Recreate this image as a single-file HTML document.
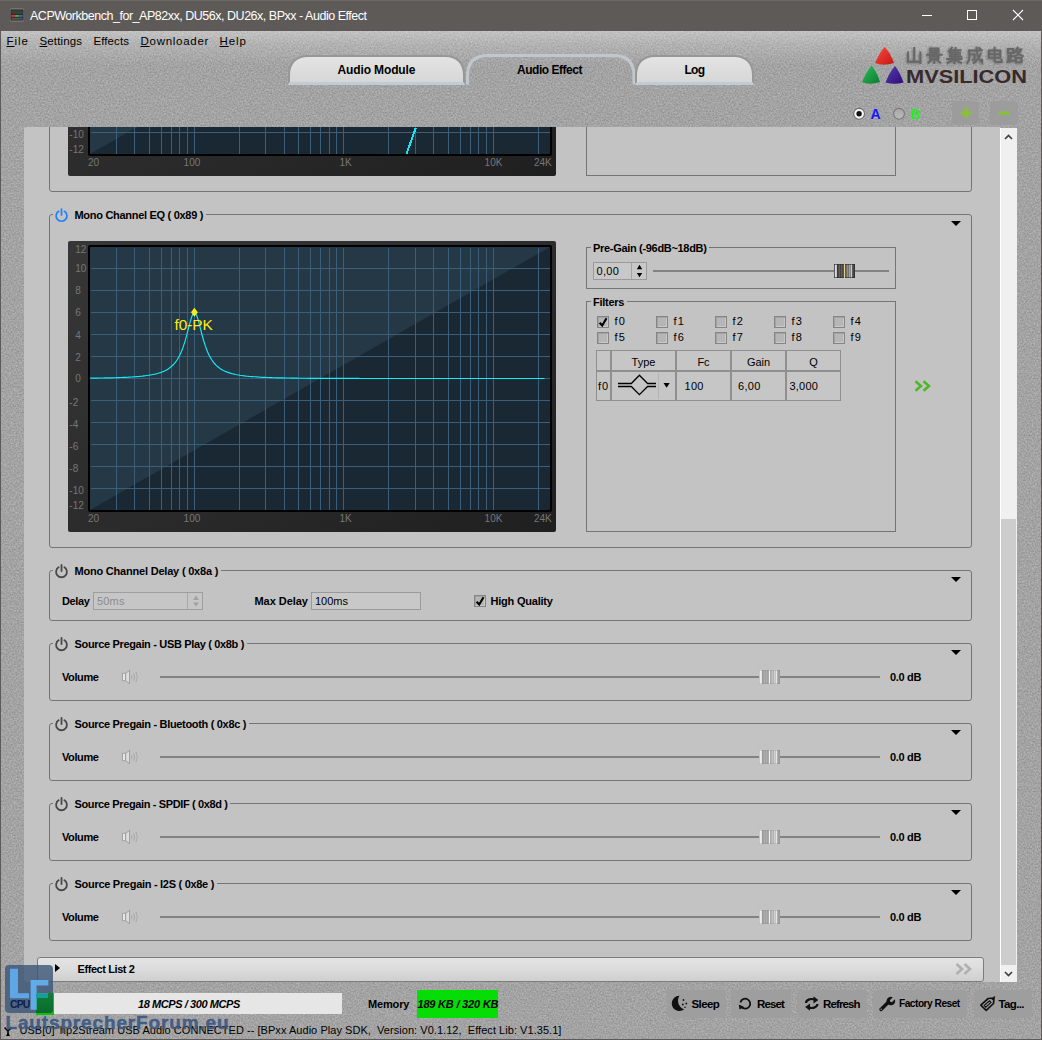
<!DOCTYPE html>
<html>
<head>
<meta charset="utf-8">
<title>ACPWorkbench - Audio Effect</title>
<style>
*{box-sizing:border-box;margin:0;padding:0}
html,body{width:1042px;height:1040px;overflow:hidden}
body{position:relative;background:#a3a3a3;font-family:"Liberation Sans",sans-serif;font-size:11px;color:#000}
.abs{position:absolute}
#noise{position:absolute;left:0;top:30px;width:1042px;height:1010px}
#titlebar{position:absolute;left:0;top:0;width:1042px;height:31px;background:#5e5a58;border-top:1px solid #6c6967}
#titlebar .t{position:absolute;left:30px;top:8px;font-size:12px;color:#fff;letter-spacing:-0.23px;white-space:nowrap}
#wl,#wr,#wb{position:absolute;background:#5e5a58}
#wl{left:0;top:30px;width:1px;height:1010px}
#wr{left:1041px;top:30px;width:1px;height:1010px}
#wb{left:0;top:1039px;width:1042px;height:1px}
#menu span{position:absolute;top:34px;font-size:12px;letter-spacing:0.35px;white-space:nowrap}
#menu u{text-decoration:underline;text-underline-offset:1px}
.tab{position:absolute;font-weight:bold;font-size:12px;text-align:center;white-space:nowrap;letter-spacing:-0.15px}
#panel{position:absolute;left:24px;top:127px;width:976px;height:855px;background:#c3c3c3;border-radius:3px 0 0 3px;overflow:hidden}
#content{position:absolute;left:-24px;top:-127px;width:1042px;height:1040px}
.gb{position:absolute;border:1px solid #757575;border-radius:3px}
.gbt{position:absolute;font-weight:bold;font-size:11px;white-space:nowrap;background:#c3c3c3;letter-spacing:-0.33px;line-height:13px}
.lbl{position:absolute;font-weight:bold;font-size:11px;white-space:nowrap;letter-spacing:-0.3px;line-height:13px}
.txt{position:absolute;font-size:11px;white-space:nowrap;line-height:13px}
.arr{position:absolute;width:0;height:0;margin-top:1px;border-left:5px solid transparent;border-right:5px solid transparent;border-top:5px solid #000}
.cb{position:absolute;width:12px;height:12px;border:1px solid #858585;background:#b6b6b6;box-shadow:inset 1px 1px 0 #a4a4a4,inset -1px -1px 0 #c8c8c8}
.trk{position:absolute;height:2px;background:#828282}
.hnd{position:absolute;width:21px;height:14px;border:1px solid #9c9c9c;border-radius:1px;background:repeating-linear-gradient(90deg,#d8d8d8 0,#d8d8d8 1px,#b4b4b4 1px,#b4b4b4 2px,#cfcfcf 2px,#cfcfcf 3px)}
.btn{position:absolute;top:990px;height:28px;background:#9e9e9e;border-radius:4px}
.btn span{position:absolute;top:8px;font-weight:bold;font-size:11.5px;white-space:nowrap;letter-spacing:-0.3px}
</style>
</head>
<body>
<svg id="noise" width="1042" height="1010"><filter id="nf" x="0" y="0" width="100%" height="100%" color-interpolation-filters="sRGB"><feTurbulence type="fractalNoise" baseFrequency="0.62" numOctaves="2" seed="7"/><feColorMatrix type="matrix" values="0.24 0 0 0 0.52  0.24 0 0 0 0.52  0.24 0 0 0 0.52  0 0 0 0 1"/></filter><rect width="1042" height="1010" filter="url(#nf)"/></svg>

<!-- title bar -->
<div id="titlebar">
  <svg class="abs" style="left:10px;top:7px" width="14" height="14" viewBox="0.5 1 15 14"><rect x="0.5" y="1.5" width="15" height="13" rx="1.5" fill="#2b2b2b" stroke="#8a8a8a"/><rect x="2" y="3" width="12" height="4" fill="#3a3f3a"/><rect x="2" y="8" width="4" height="2" fill="#d33"/><rect x="6" y="8" width="4" height="2" fill="#3b3"/><rect x="10" y="8" width="4" height="2" fill="#36d"/><rect x="2" y="11" width="12" height="2" fill="#555"/></svg>
  <div class="txt" style="left:30px;top:8px;font-size:12.5px;letter-spacing:-0.479px;font-weight:normal;color:#fff;line-height:15px">ACPWorkbench_for_AP82xx, DU56x, DU26x, BPxx - Audio Effect</div>
  <svg class="abs" style="left:900px;top:-1px" width="142" height="30" viewBox="0 0 142 30"><path d="M22 15.5H32" stroke="#fff" stroke-width="1"/><rect x="67.5" y="10.5" width="9" height="9" fill="none" stroke="#fff" stroke-width="1"/><path d="M113 10L123 20M123 10L113 20" stroke="#fff" stroke-width="1.1"/></svg>
</div>
<div id="wl"></div><div id="wr"></div><div id="wb"></div>

<!-- menu -->
<div class="abs" style="left:1px;top:31px;width:1040px;height:34px;background:linear-gradient(rgba(255,255,255,0.34),rgba(255,255,255,0.16) 40%,rgba(255,255,255,0))"></div>
<div id="menu">
  <div class="txt" style="left:6.5px;top:34px;font-size:11.5px;letter-spacing:0.963px;font-weight:normal;line-height:14px"><u>F</u>ile</div>
  <div class="txt" style="left:39.5px;top:34px;font-size:11.5px;letter-spacing:0.124px;font-weight:normal;line-height:14px"><u>S</u>ettings</div>
  <div class="txt" style="left:93.5px;top:34px;font-size:11.5px;letter-spacing:0.079px;font-weight:normal;line-height:14px">Effects</div>
  <div class="txt" style="left:140.5px;top:34px;font-size:11.5px;letter-spacing:0.728px;font-weight:normal;line-height:14px"><u>D</u>ownloader</div>
  <div class="txt" style="left:219.5px;top:34px;font-size:11.5px;letter-spacing:0.923px;font-weight:normal;line-height:14px"><u>H</u>elp</div>
</div>

<!-- tabs -->
<svg class="abs" style="left:280px;top:48px" width="490" height="44" viewBox="280 48 490 44">
  <defs><linearGradient id="tg" x1="0" y1="0" x2="0" y2="1"><stop offset="0" stop-color="#e4e4e4"/><stop offset="1" stop-color="#d6d6d6"/></linearGradient></defs>
  <!-- Audio Module -->
  <path d="M289 84V75C289 63 296 56 308 56H445C457 56 464 63 464 75V84Z" fill="url(#tg)" stroke="#979797" stroke-width="2"/>
  <path d="M287.500 85L289.500 82H463.500L465.500 85Z" fill="#c3cbd2"/>
  <!-- Audio Effect -->
  <path d="M467.500 84.500V76C467.500 62.500 474.500 55.500 488 55.500H613.500C627 55.500 634 62.500 634 76V84.500" fill="none" stroke="#c0c7ce" stroke-width="3"/>
  <!-- Log -->
  <path d="M636 84V75C636 63 643 56 655 56H734C746 56 753 63 753 75V84Z" fill="url(#tg)" stroke="#979797" stroke-width="2"/>
  <path d="M634.500 85L636.500 82H752.500L754.500 85Z" fill="#c3cbd2"/>
</svg>
<div class="lbl" style="left:337.5px;top:63px;font-size:12px;letter-spacing:-0.124px;font-weight:bold;line-height:14px">Audio Module</div>
<div class="lbl" style="left:517px;top:63px;font-size:12px;letter-spacing:-0.473px;font-weight:bold;line-height:14px">Audio Effect</div>
<div class="lbl" style="left:684.5px;top:63px;font-size:12px;letter-spacing:-0.765px;font-weight:bold;line-height:14px">Log</div>

<!-- logo -->
<svg class="abs" style="left:858px;top:42px" width="175" height="46" viewBox="858 42 175 46">
<defs>
<linearGradient id="lr" x1="0" y1="0" x2="1" y2="1"><stop offset="0" stop-color="#ff4a3a"/><stop offset="1" stop-color="#c01818"/></linearGradient>
<linearGradient id="lg" x1="0" y1="0" x2="1" y2="1"><stop offset="0" stop-color="#2ec05a"/><stop offset="1" stop-color="#0a7a30"/></linearGradient>
<linearGradient id="lb" x1="0" y1="0" x2="1" y2="1"><stop offset="0" stop-color="#5a3ab0"/><stop offset="1" stop-color="#2a1078"/></linearGradient>
</defs>
<path d="M884.500 47Q880 52 875 63Q884 66.500 894 63Q890 52 884.500 47Z" fill="url(#lr)"/>
<path d="M871.500 65.500Q866 72 862 82.500Q871 85 880 82Q877 72 871.500 65.500Z" fill="url(#lg)"/>
<path d="M895 66Q889 73 885.500 82.500Q895 85 903.500 82.500Q900 72 895 66Z" fill="url(#lb)"/>
<defs><filter id="cjb" x="-20%" y="-30%" width="140%" height="160%"><feGaussianBlur stdDeviation="1.300"/></filter></defs>
<g fill="none" stroke="#5c5c5c" stroke-width="2.600" opacity="0.550" filter="url(#cjb)"><path transform="translate(905.2 48.300) scale(1.030 0.970)" d="M8 0.500V14.500M2 5V14.500H14M14 5V15.800"/><path transform="translate(925.3 48.300) scale(1.030 0.970)" d="M4 0.800H12V5.200H4ZM4 3H12M1 7.300H15M8 5.200V7.300M4.200 9.200H11.800V11.800H4.200ZM8 11.800V16M5 13L2.200 15.600M11 13L13.800 15.600"/><path transform="translate(945.4 48.300) scale(1.030 0.970)" d="M5.500 0L2.500 4M4 3V9.500M4 2.600H14M4 4.900H13.500M4 7.200H13.500M4 9.500H14.800M9 0.300V9.500M1 11.800H15M8 9.500V16.200M7 12.500L1.500 15.800M9 12.500L14.500 15.800"/><path transform="translate(965.5 48.300) scale(1.030 0.970)" d="M2.500 3H15M3 3V10Q3 14 1 15.800M3 7H8V11.800L6.300 12.600M9.800 0Q10.300 10.500 15.300 15.300V12.500M14 6.300Q12 12 7.300 15.800M12.300 0.300L14 2"/><path transform="translate(985.6 48.300) scale(1.030 0.970)" d="M2.500 3H13.500V10.500H2.500ZM2.500 6.800H13.500M8 0V13.200Q8 14.800 9.800 14.800H14.800V12.500"/><path transform="translate(1005.7 48.300) scale(1.030 0.970)" d="M1.500 1.500H6.500V5.500H1.500ZM4 5.500V13.800M4 9H7M1.800 8.300V14.600M1 14.900L7.500 13.200M10.800 0L8 4.800M9.800 2H14.200Q12.500 6.500 7.800 9.200M9.800 3.800Q11.800 7.500 15.800 8.800M9.200 10.600H14.600V15.200H9.200Z"/></g>
<g fill="none" stroke="#676767" stroke-width="2" stroke-linecap="square"><path transform="translate(906.0 47.600) scale(1.030 0.970)" d="M8 0.500V14.500M2 5V14.500H14M14 5V15.800"/><path transform="translate(926.1 47.600) scale(1.030 0.970)" d="M4 0.800H12V5.200H4ZM4 3H12M1 7.300H15M8 5.200V7.300M4.200 9.200H11.800V11.800H4.200ZM8 11.800V16M5 13L2.200 15.600M11 13L13.800 15.600"/><path transform="translate(946.2 47.600) scale(1.030 0.970)" d="M5.500 0L2.500 4M4 3V9.500M4 2.600H14M4 4.900H13.500M4 7.200H13.500M4 9.500H14.800M9 0.300V9.500M1 11.800H15M8 9.500V16.200M7 12.500L1.500 15.800M9 12.500L14.500 15.800"/><path transform="translate(966.3 47.600) scale(1.030 0.970)" d="M2.500 3H15M3 3V10Q3 14 1 15.800M3 7H8V11.800L6.300 12.600M9.800 0Q10.300 10.500 15.300 15.300V12.500M14 6.300Q12 12 7.300 15.800M12.300 0.300L14 2"/><path transform="translate(986.4 47.600) scale(1.030 0.970)" d="M2.500 3H13.500V10.500H2.500ZM2.500 6.800H13.500M8 0V13.200Q8 14.800 9.800 14.800H14.800V12.500"/><path transform="translate(1006.5 47.600) scale(1.030 0.970)" d="M1.500 1.500H6.500V5.500H1.500ZM4 5.500V13.800M4 9H7M1.800 8.300V14.600M1 14.900L7.500 13.200M10.800 0L8 4.800M9.800 2H14.200Q12.500 6.500 7.800 9.200M9.800 3.800Q11.800 7.500 15.800 8.800M9.200 10.600H14.600V15.200H9.200Z"/></g>
<text x="906" y="82.500" font-family="Liberation Sans, sans-serif" font-weight="bold" font-size="18" fill="#382a2c" textLength="121" lengthAdjust="spacingAndGlyphs">MVSILICON</text>
</svg>

<!-- A/B radios, +/- -->
<svg class="abs" style="left:850px;top:100px" width="180" height="28" viewBox="850 100 180 28">
  <defs><linearGradient id="rg" x1="0" y1="0" x2="0" y2="1"><stop offset="0" stop-color="#a6a6a6"/><stop offset="1" stop-color="#bcbcbc"/></linearGradient></defs>
  <circle cx="859.100" cy="113.800" r="5.400" fill="#f6f6f6" stroke="#707070" stroke-width="1.100"/><circle cx="859.100" cy="113.800" r="2.700" fill="#101010"/>
  <circle cx="899" cy="113.800" r="5.400" fill="url(#rg)" stroke="#787878" stroke-width="1.100"/>
  <rect x="952" y="101" width="27" height="24" rx="4" fill="#9b9b9b" fill-opacity="0.900"/>
  <rect x="990" y="101" width="28" height="24" rx="4" fill="#9b9b9b" fill-opacity="0.900"/>
  <path d="M962.200 113H970.200M966.200 109V117" stroke="#86c232" stroke-width="3.400" stroke-linecap="round"/>
  <path d="M1000.200 113.100H1008.200" stroke="#86c232" stroke-width="3.400" stroke-linecap="round"/>
</svg>
<div class="abs" style="left:870.500px;top:106px;font-weight:bold;font-size:14px;line-height:16px;color:#1414ff">A</div>
<div class="abs" style="left:910.500px;top:106px;font-weight:bold;font-size:14px;line-height:16px;color:#18f818;letter-spacing:-0.5px;transform:scaleX(0.92);transform-origin:left">B</div>

<!-- main panel -->
<div id="panel"><div id="content">

  <!-- previous group (cut) -->
  <div class="gb" style="left:49px;top:100px;width:923px;height:92px"></div>
  <div class="gb" style="left:586px;top:100px;width:310px;height:76px;border-radius:0"></div>
  <svg class="graph" style="position:absolute;left:68px;top:-115px" width="488" height="291" viewBox="68 241 488 291">
<defs><linearGradient id="fr-115" x1="0" y1="0" x2="1" y2="1"><stop offset="0" stop-color="#373737"/><stop offset="0.5" stop-color="#2c2c2c"/><stop offset="1" stop-color="#1f1f1f"/></linearGradient></defs>
<rect x="68" y="241" width="488" height="291" rx="2" fill="url(#fr-115)"/>
<rect x="88" y="245" width="464" height="267" rx="2" fill="#000"/>
<rect x="90" y="247" width="460" height="263" rx="1" fill="#1a2833"/>
<polygon points="90,247 550,247 90,510" fill="#253845"/>
<path d="M116.5 248V510 M134.5 248V510 M149.5 248V510 M161.5 248V510 M171.5 248V510 M179.5 248V510 M187.5 248V510 M194.5 248V510 M239.5 248V510 M265.5 248V510 M284.5 248V510 M298.5 248V510 M310.5 248V510 M320.5 248V510 M329.5 248V510 M336.5 248V510 M343.5 248V510 M388.5 248V510 M415.5 248V510 M433.5 248V510 M448.5 248V510 M460.5 248V510 M470.5 248V510 M478.5 248V510 M486.5 248V510 M493.5 248V510 M538.5 248V510 M91 488.5H550 M91 466.5H550 M91 444.5H550 M91 422.5H550 M91 400.5H550 M91 378.5H550 M91 356.5H550 M91 334.5H550 M91 312.5H550 M91 290.5H550 M91 268.5H550" stroke="#3b5f7b" stroke-width="1" fill="none" shape-rendering="crispEdges"/>
<g font-family="Liberation Sans, sans-serif" font-size="10" fill="#767676">
<text x="75.2" y="252.8">12</text>
<text x="75.2" y="272.0">10</text>
<text x="75.2" y="294.1">8</text>
<text x="75.2" y="316.0">6</text>
<text x="75.2" y="338.6">4</text>
<text x="75.2" y="360.7">2</text>
<text x="75.2" y="382.3">0</text>
<text x="69.3" y="405.5">-2</text>
<text x="69.3" y="427.9">-4</text>
<text x="69.3" y="450.2">-6</text>
<text x="69.3" y="471.9">-8</text>
<text x="69.3" y="493.8">-10</text>
<text x="69.3" y="509.4">-12</text>
<text x="88" y="521.6">20</text>
<text x="183.6" y="521.6">100</text>
<text x="339.4" y="521.6">1K</text>
<text x="484.6" y="521.6">10K</text>
<text x="534" y="521.6">24K</text>
</g>
<path d="M406.5 510 L415.7 484" stroke="#19e6f0" stroke-width="2" fill="none" shape-rendering="crispEdges"/>
</svg>

  <!-- Mono Channel EQ -->
  <div class="gb" style="left:49px;top:214px;width:923px;height:334px"></div>
  <div class="gbt" style="left:53px;top:209px;width:153px;height:13px"></div><div class="lbl" style="left:74.5px;top:209px;font-size:11px;letter-spacing:-0.296px;font-weight:bold;">Mono Channel EQ ( 0x89 )</div>
  <svg class="abs" style="left:54px;top:207.500px" width="15" height="15" viewBox="0 0 15 15"><path d="M4.600 3.300A5.400 5.400 0 1 0 10.400 3.300" fill="none" stroke="#1e80ff" stroke-width="1.700" stroke-linecap="round"/><path d="M7.500 1V7" stroke="#1e80ff" stroke-width="1.700" stroke-linecap="round"/></svg>
  <div class="arr" style="left:951px;top:220px"></div>
  <svg class="graph" style="position:absolute;left:68px;top:241px" width="488" height="291" viewBox="68 241 488 291">
<defs><linearGradient id="fr241" x1="0" y1="0" x2="1" y2="1"><stop offset="0" stop-color="#373737"/><stop offset="0.5" stop-color="#2c2c2c"/><stop offset="1" stop-color="#1f1f1f"/></linearGradient></defs>
<rect x="68" y="241" width="488" height="291" rx="2" fill="url(#fr241)"/>
<rect x="88" y="245" width="464" height="267" rx="2" fill="#000"/>
<rect x="90" y="247" width="460" height="263" rx="1" fill="#1a2833"/>
<polygon points="90,247 550,247 90,510" fill="#253845"/>
<path d="M116.5 248V510 M134.5 248V510 M149.5 248V510 M161.5 248V510 M171.5 248V510 M179.5 248V510 M187.5 248V510 M194.5 248V510 M239.5 248V510 M265.5 248V510 M284.5 248V510 M298.5 248V510 M310.5 248V510 M320.5 248V510 M329.5 248V510 M336.5 248V510 M343.5 248V510 M388.5 248V510 M415.5 248V510 M433.5 248V510 M448.5 248V510 M460.5 248V510 M470.5 248V510 M478.5 248V510 M486.5 248V510 M493.5 248V510 M538.5 248V510 M91 488.5H550 M91 466.5H550 M91 444.5H550 M91 422.5H550 M91 400.5H550 M91 378.5H550 M91 356.5H550 M91 334.5H550 M91 312.5H550 M91 290.5H550 M91 268.5H550" stroke="#3b5f7b" stroke-width="1" fill="none" shape-rendering="crispEdges"/>
<g font-family="Liberation Sans, sans-serif" font-size="10" fill="#767676">
<text x="75.2" y="252.8">12</text>
<text x="75.2" y="272.0">10</text>
<text x="75.2" y="294.1">8</text>
<text x="75.2" y="316.0">6</text>
<text x="75.2" y="338.6">4</text>
<text x="75.2" y="360.7">2</text>
<text x="75.2" y="382.3">0</text>
<text x="69.3" y="405.5">-2</text>
<text x="69.3" y="427.9">-4</text>
<text x="69.3" y="450.2">-6</text>
<text x="69.3" y="471.9">-8</text>
<text x="69.3" y="493.8">-10</text>
<text x="69.3" y="509.4">-12</text>
<text x="88" y="521.6">20</text>
<text x="183.6" y="521.6">100</text>
<text x="339.4" y="521.6">1K</text>
<text x="484.6" y="521.6">10K</text>
<text x="534" y="521.6">24K</text>
</g>
<path d="M90.0 378.2 L91.5 378.1 L93.0 378.1 L94.5 378.1 L96.0 378.1 L97.5 378.1 L99.0 378.0 L100.5 378.0 L102.0 378.0 L103.5 378.0 L105.0 377.9 L106.5 377.9 L108.0 377.9 L109.5 377.8 L111.0 377.8 L112.5 377.8 L114.0 377.7 L115.5 377.7 L117.0 377.6 L118.5 377.6 L120.0 377.5 L121.5 377.5 L123.0 377.4 L124.5 377.3 L126.0 377.3 L127.5 377.2 L129.0 377.1 L130.5 377.0 L132.0 377.0 L133.5 376.9 L135.0 376.8 L136.5 376.6 L138.0 376.5 L139.5 376.4 L141.0 376.2 L142.5 376.1 L144.0 375.9 L145.5 375.7 L147.0 375.5 L148.5 375.3 L150.0 375.1 L151.5 374.8 L153.0 374.5 L154.5 374.2 L156.0 373.9 L157.5 373.5 L159.0 373.0 L160.5 372.6 L162.0 372.0 L163.5 371.4 L165.0 370.7 L166.5 369.9 L168.0 369.0 L169.5 368.0 L171.0 366.8 L172.5 365.5 L174.0 363.9 L175.5 362.1 L177.0 360.0 L178.5 357.5 L180.0 354.7 L181.5 351.3 L183.0 347.4 L184.5 342.9 L186.0 337.8 L187.5 332.2 L189.0 326.3 L190.5 320.6 L192.0 315.9 L193.5 313.0 L195.0 312.7 L196.5 315.0 L198.0 319.4 L199.5 324.9 L201.0 330.8 L202.5 336.5 L204.0 341.8 L205.5 346.4 L207.0 350.5 L208.5 353.9 L210.0 356.9 L211.5 359.5 L213.0 361.7 L214.5 363.5 L216.0 365.1 L217.5 366.5 L219.0 367.7 L220.5 368.8 L222.0 369.7 L223.5 370.5 L225.0 371.2 L226.5 371.9 L228.0 372.4 L229.5 372.9 L231.0 373.4 L232.5 373.8 L234.0 374.1 L235.5 374.5 L237.0 374.8 L238.5 375.0 L240.0 375.3 L241.5 375.5 L243.0 375.7 L244.5 375.9 L246.0 376.1 L247.5 376.2 L249.0 376.4 L250.5 376.5 L252.0 376.6 L253.5 376.7 L255.0 376.8 L256.5 376.9 L258.0 377.0 L259.5 377.1 L261.0 377.2 L262.5 377.3 L264.0 377.3 L265.5 377.4 L267.0 377.5 L268.5 377.5 L270.0 377.6 L271.5 377.6 L273.0 377.7 L274.5 377.7 L276.0 377.8 L277.5 377.8 L279.0 377.8 L280.5 377.9 L282.0 377.9 L283.5 377.9 L285.0 378.0 L286.5 378.0 L288.0 378.0 L289.5 378.0 L291.0 378.1 L292.5 378.1 L294.0 378.1 L295.5 378.1 L297.0 378.1 L298.5 378.2 L300.0 378.2 L301.5 378.2 L303.0 378.2 L304.5 378.2 L306.0 378.2 L307.5 378.2 L309.0 378.3 L310.5 378.3 L312.0 378.3 L313.5 378.3 L315.0 378.3 L316.5 378.3 L318.0 378.3 L319.5 378.3 L321.0 378.3 L322.5 378.3 L324.0 378.3 L325.5 378.4 L327.0 378.4 L328.5 378.4 L330.0 378.4 L331.5 378.4 L333.0 378.4 L334.5 378.4 L336.0 378.4 L337.5 378.4 L339.0 378.4 L340.5 378.4 L342.0 378.4 L343.5 378.4 L345.0 378.4 L346.5 378.4 L348.0 378.4 L349.5 378.4 L351.0 378.4 L352.5 378.4 L354.0 378.4 L355.5 378.4 L357.0 378.4 L358.5 378.4 L360.0 378.5 L361.5 378.5 L363.0 378.5 L364.5 378.5 L366.0 378.5 L367.5 378.5 L369.0 378.5 L370.5 378.5 L372.0 378.5 L373.5 378.5 L375.0 378.5 L376.5 378.5 L378.0 378.5 L379.5 378.5 L381.0 378.5 L382.5 378.5 L384.0 378.5 L385.5 378.5 L387.0 378.5 L388.5 378.5 L390.0 378.5 L391.5 378.5 L393.0 378.5 L394.5 378.5 L396.0 378.5 L397.5 378.5 L399.0 378.5 L400.5 378.5 L402.0 378.5 L403.5 378.5 L405.0 378.5 L406.5 378.5 L408.0 378.5 L409.5 378.5 L411.0 378.5 L412.5 378.5 L414.0 378.5 L415.5 378.5 L417.0 378.5 L418.5 378.5 L420.0 378.5 L421.5 378.5 L423.0 378.5 L424.5 378.5 L426.0 378.5 L427.5 378.5 L429.0 378.5 L430.5 378.5 L432.0 378.5 L433.5 378.5 L435.0 378.5 L436.5 378.5 L438.0 378.5 L439.5 378.5 L441.0 378.5 L442.5 378.5 L444.0 378.5 L445.5 378.5 L447.0 378.5 L448.5 378.5 L450.0 378.5 L451.5 378.5 L453.0 378.5 L454.5 378.5 L456.0 378.5 L457.5 378.5 L459.0 378.5 L460.5 378.5 L462.0 378.5 L463.5 378.5 L465.0 378.5 L466.5 378.5 L468.0 378.5 L469.5 378.5 L471.0 378.5 L472.5 378.5 L474.0 378.5 L475.5 378.5 L477.0 378.5 L478.5 378.5 L480.0 378.5 L481.5 378.5 L483.0 378.5 L484.5 378.5 L486.0 378.5 L487.5 378.5 L489.0 378.5 L490.5 378.5 L492.0 378.5 L493.5 378.5 L495.0 378.5 L496.5 378.5 L498.0 378.5 L499.5 378.5 L501.0 378.5 L502.5 378.5 L504.0 378.5 L505.5 378.5 L507.0 378.5 L508.5 378.5 L510.0 378.5 L511.5 378.5 L513.0 378.5 L514.5 378.5 L516.0 378.5 L517.5 378.5 L519.0 378.5 L520.5 378.5 L522.0 378.5 L523.5 378.5 L525.0 378.5 L526.5 378.5 L528.0 378.5 L529.5 378.5 L531.0 378.5 L532.5 378.5 L534.0 378.5 L535.5 378.5 L537.0 378.5 L538.5 378.5 L540.0 378.5 L541.5 378.5 L543.0 378.5 L544.5 378.5" stroke="#12eef8" stroke-width="1.15" fill="none"/>
<polygon points="194.4,307.7 197.8,312.2 194.4,316.7 191.0,312.2" fill="#ffea1a"/>
<text x="174.4" y="330" font-family="Liberation Sans, sans-serif" font-size="15" fill="#ffea1a" textLength="38.5" lengthAdjust="spacingAndGlyphs">f0-PK</text>
</svg>

  <!-- Pre-Gain -->
  <div class="gb" style="left:586px;top:247px;width:310px;height:42px;border-radius:0"></div>
  <div class="gbt" style="left:591px;top:242px;width:118px;height:13px"></div><div class="lbl" style="left:593px;top:242px;font-size:11px;letter-spacing:-0.312px;font-weight:bold;">Pre-Gain (-96dB~18dB)</div>
  <div class="abs" style="left:593px;top:262px;width:54px;height:18px;border:1px solid #9a9a9a;background:#c8c8c8"></div>
  <div class="abs" style="left:631px;top:263px;width:1px;height:16px;background:#a4a4a4"></div>
  <div class="txt" style="left:596.5px;top:265px;font-size:11px;letter-spacing:0.324px;font-weight:normal;">0,00</div>
  <svg class="abs" style="left:634px;top:264px" width="11" height="14" viewBox="0 0 11 14"><path d="M5.500 0.800L8.200 5.300H2.800Z M5.500 13.300L8.200 8.900H2.800Z" fill="#000"/></svg>
  <div class="trk" style="left:653px;top:270px;width:236px"></div>
  <svg class="abs" style="left:834px;top:264px" width="21" height="14" viewBox="0 0 21 14" shape-rendering="crispEdges"><rect x="0" y="0" width="1" height="14" fill="#5a5a5a"/><rect x="1" y="0" width="1" height="14" fill="#dadada"/><rect x="2" y="0" width="1" height="14" fill="#c6c6c6"/><rect x="3" y="0" width="1" height="14" fill="#3a3a3a"/><rect x="4" y="0" width="1" height="14" fill="#4a4a4a"/><rect x="5" y="0" width="1" height="14" fill="#626262"/><rect x="6" y="0" width="1" height="14" fill="#444"/><rect x="7" y="0" width="1" height="14" fill="#5e5e5e"/><rect x="8" y="0" width="1" height="14" fill="#484848"/><rect x="9" y="0" width="1" height="14" fill="#585858"/><rect x="10" y="0" width="1" height="14" fill="#f0dc90"/><rect x="11" y="0" width="1" height="14" fill="#5a5a5a"/><rect x="12" y="0" width="1" height="14" fill="#707070"/><rect x="13" y="0" width="1" height="14" fill="#8c8c8c"/><rect x="14" y="0" width="1" height="14" fill="#707070"/><rect x="15" y="0" width="1" height="14" fill="#a2a2a2"/><rect x="16" y="0" width="1" height="14" fill="#888"/><rect x="17" y="0" width="1" height="14" fill="#cacaca"/><rect x="18" y="0" width="1" height="14" fill="#5c5c5c"/><rect x="19" y="0" width="1" height="14" fill="#484848"/><rect x="20" y="0" width="1" height="14" fill="#343434"/><rect x="0" y="0" width="21" height="1" fill="#2c2c2c" opacity="0.6"/><rect x="0" y="13" width="21" height="1" fill="#2c2c2c" opacity="0.6"/><rect x="10" y="0" width="1" height="14" fill="#e6cf80"/></svg>

  <!-- Filters -->
  <div class="gb" style="left:586px;top:301px;width:310px;height:231px;border-radius:0"></div>
  <div class="gbt" style="left:591px;top:295px;width:36px;height:13px"></div><div class="lbl" style="left:593px;top:296px;font-size:11px;letter-spacing:-0.272px;font-weight:bold;">Filters</div>
  <div class="cb" style="left:597px;top:316px"></div>
  <svg class="abs" style="left:597px;top:316px" width="12" height="12" viewBox="0 0 12 12"><path d="M2.600 6.800L5.200 9.500L9.500 2.300" fill="none" stroke="#000" stroke-width="2.100"/></svg>
  <div class="txt" style="left:614.5px;top:315px;font-size:11px;letter-spacing:1.206px;font-weight:normal;">f0</div>
  <div class="cb" style="left:656px;top:316px"></div>
  <div class="txt" style="left:673.5px;top:315px;font-size:11px;letter-spacing:1.206px;font-weight:normal;">f1</div>
  <div class="cb" style="left:715px;top:316px"></div>
  <div class="txt" style="left:732.5px;top:315px;font-size:11px;letter-spacing:1.206px;font-weight:normal;">f2</div>
  <div class="cb" style="left:774px;top:316px"></div>
  <div class="txt" style="left:791.5px;top:315px;font-size:11px;letter-spacing:1.206px;font-weight:normal;">f3</div>
  <div class="cb" style="left:833px;top:316px"></div>
  <div class="txt" style="left:850.5px;top:315px;font-size:11px;letter-spacing:1.206px;font-weight:normal;">f4</div>
  <div class="cb" style="left:597px;top:332px"></div>
  <div class="txt" style="left:614.5px;top:331px;font-size:11px;letter-spacing:1.206px;font-weight:normal;">f5</div>
  <div class="cb" style="left:656px;top:332px"></div>
  <div class="txt" style="left:673.5px;top:331px;font-size:11px;letter-spacing:1.206px;font-weight:normal;">f6</div>
  <div class="cb" style="left:715px;top:332px"></div>
  <div class="txt" style="left:732.5px;top:331px;font-size:11px;letter-spacing:1.206px;font-weight:normal;">f7</div>
  <div class="cb" style="left:774px;top:332px"></div>
  <div class="txt" style="left:791.5px;top:331px;font-size:11px;letter-spacing:1.206px;font-weight:normal;">f8</div>
  <div class="cb" style="left:833px;top:332px"></div>
  <div class="txt" style="left:850.5px;top:331px;font-size:11px;letter-spacing:1.206px;font-weight:normal;">f9</div>
  <div class="abs" style="left:596px;top:350px;width:245px;height:51px;background:#8f8f8f"></div>
  <div class="abs" style="left:597px;top:351px;width:13px;height:19px;background:#c6c6c6"></div>
  <div class="abs" style="left:612px;top:351px;width:63px;height:19px;background:#c6c6c6"></div>
  <div class="abs" style="left:677px;top:351px;width:53px;height:19px;background:#c6c6c6"></div>
  <div class="abs" style="left:732px;top:351px;width:53px;height:19px;background:#c6c6c6"></div>
  <div class="abs" style="left:787px;top:351px;width:53px;height:19px;background:#c6c6c6"></div>
  <div class="abs" style="left:597px;top:372px;width:13px;height:28px;background:#c6c6c6"></div>
  <div class="abs" style="left:612px;top:372px;width:63px;height:28px;background:#c6c6c6"></div>
  <div class="abs" style="left:677px;top:372px;width:53px;height:28px;background:#c6c6c6"></div>
  <div class="abs" style="left:732px;top:372px;width:53px;height:28px;background:#c6c6c6"></div>
  <div class="abs" style="left:787px;top:372px;width:53px;height:28px;background:#c6c6c6"></div>
  <div class="txt" style="left:612px;top:356px;width:63px;text-align:center">Type</div>
  <div class="txt" style="left:677px;top:356px;width:53px;text-align:center">Fc</div>
  <div class="txt" style="left:732px;top:356px;width:53px;text-align:center">Gain</div>
  <div class="txt" style="left:787px;top:356px;width:53px;text-align:center">Q</div>
  <div class="txt" style="left:598px;top:380px;font-size:11px;letter-spacing:1.006px;font-weight:normal;">f0</div>
  <div class="txt" style="left:684.500px;top:380px;font-size:11px;letter-spacing:0.263px;font-weight:normal;">100</div>
  <div class="txt" style="left:738px;top:380px;font-size:11px;letter-spacing:0.324px;font-weight:normal;">6,00</div>
  <div class="txt" style="left:789.500px;top:380px;font-size:11px;letter-spacing:0.213px;font-weight:normal;">3,000</div>
  <div class="abs" style="left:658px;top:373px;width:1px;height:26px;background:#b4b4b4"></div>
  <svg class="abs" style="left:616px;top:374px" width="58" height="24" viewBox="0 0 58 24"><path d="M2 9.500H15.300L23.400 1.200L31.600 9.500H40M2 12.500H15.300L23.400 20.700L31.600 12.500H40" fill="none" stroke="#000" stroke-width="1.300"/><path d="M47.500 9H53.700L50.600 13.800Z" fill="#000"/></svg>
  <svg class="abs" style="left:913px;top:379px" width="20" height="14" viewBox="0 0 20 14"><path d="M2.500 2.300L8 7L2.500 11.700M10.500 2.300L16 7L10.500 11.700" fill="none" stroke="#4cb822" stroke-width="2.500"/></svg>

  <!-- Mono Channel Delay -->
  <div class="gb" style="left:49px;top:570px;width:923px;height:51px"></div>
  <div class="gbt" style="left:53px;top:565px;width:168px;height:13px"></div><div class="lbl" style="left:74.5px;top:565px;font-size:11px;letter-spacing:-0.203px;font-weight:bold;">Mono Channel Delay ( 0x8a )</div>
  <svg class="abs" style="left:54px;top:564px" width="15" height="15" viewBox="0 0 15 15"><path d="M4.600 3.300A5.400 5.400 0 1 0 10.400 3.300" fill="none" stroke="#484848" stroke-width="1.800" stroke-linecap="round"/><path d="M7.500 1V7" stroke="#484848" stroke-width="1.800" stroke-linecap="round"/></svg>
  <div class="arr" style="left:951px;top:576px"></div>
  <div class="lbl" style="left:62px;top:595px;font-size:11px;letter-spacing:-0.368px;font-weight:bold;">Delay</div>
  <div class="abs" style="left:93px;top:592px;width:110px;height:18px;border:1px solid #9e9e9e;background:#c6c6c6"></div>
  <div class="abs" style="left:187px;top:593px;width:1px;height:16px;background:#a8a8a8"></div>
  <div class="txt" style="left:97px;top:595px;font-size:11px;letter-spacing:0.16px;font-weight:normal;color:#8c8c8c">50ms</div>
  <svg class="abs" style="left:191px;top:594px" width="10" height="14" viewBox="0 0 10 14"><path d="M5 1.500L8 6H2Z M5 12.500L8 8.500H2Z" fill="#a2a2a2"/></svg>
  <div class="lbl" style="left:254.5px;top:595px;font-size:11px;letter-spacing:-0.053px;font-weight:bold;">Max Delay</div>
  <div class="abs" style="left:311px;top:592px;width:110px;height:18px;border:1px solid #9a9a9a;background:#c8c8c8"></div>
  <div class="txt" style="left:315px;top:595px;font-size:11px;letter-spacing:-0.034px;font-weight:normal;">100ms</div>
  <div class="cb" style="left:474px;top:595px"></div>
  <svg class="abs" style="left:474px;top:595px" width="12" height="12" viewBox="0 0 12 12"><path d="M2.600 6.800L5.200 9.500L9.500 2.300" fill="none" stroke="#000" stroke-width="2.100"/></svg>
  <div class="lbl" style="left:490.5px;top:595px;font-size:11px;letter-spacing:-0.218px;font-weight:bold;">High Quality</div>

  <div class="gb" style="left:49px;top:643px;width:923px;height:58px"></div>
  <div class="gbt" style="left:53px;top:638px;width:194px;height:13px"></div><div class="lbl" style="left:74.5px;top:638px;font-size:11px;letter-spacing:-0.335px;font-weight:bold;">Source Pregain - USB Play ( 0x8b )</div>
  <svg class="abs" style="left:54px;top:637px" width="15" height="15" viewBox="0 0 15 15"><path d="M4.600 3.300A5.400 5.400 0 1 0 10.400 3.300" fill="none" stroke="#484848" stroke-width="1.800" stroke-linecap="round"/><path d="M7.500 1V7" stroke="#484848" stroke-width="1.800" stroke-linecap="round"/></svg>
  <div class="arr" style="left:951px;top:649px"></div>
  <div class="lbl" style="left:62px;top:671px;font-size:11px;letter-spacing:-0.407px;font-weight:bold;">Volume</div>
  <svg class="abs" style="left:121px;top:669px" width="19" height="16" viewBox="0 0 19 16"><path d="M1.400 4.300H4.700V11.700H1.400Z" fill="#e6e6e6" stroke="#9a9a9a" stroke-width="0.900"/><path d="M4.700 4.300L8.500 1.400V14.600L4.700 11.700Z" fill="#dedede" stroke="#9a9a9a" stroke-width="0.900" stroke-linejoin="round"/><path d="M10.500 6Q11.700 8 10.500 10M12.700 4.500Q14.700 8 12.700 11.500M15 3Q17.800 8 15 13" fill="none" stroke="#a6a6a6" stroke-width="0.900"/></svg>
  <div class="trk" style="left:160px;top:676px;width:720px"></div>
  <svg class="abs" style="left:759px;top:670px" width="21" height="14" viewBox="0 0 21 14" shape-rendering="crispEdges"><rect x="0" y="0" width="1" height="14" fill="#c6c6c6"/><rect x="1" y="0" width="1" height="14" fill="#ececec"/><rect x="2" y="0" width="1" height="14" fill="#e2e2e2"/><rect x="3" y="0" width="1" height="14" fill="#9a9a9a"/><rect x="4" y="0" width="1" height="14" fill="#a2a2a2"/><rect x="5" y="0" width="1" height="14" fill="#adadad"/><rect x="6" y="0" width="1" height="14" fill="#a0a0a0"/><rect x="7" y="0" width="1" height="14" fill="#aeaeae"/><rect x="8" y="0" width="1" height="14" fill="#a2a2a2"/><rect x="9" y="0" width="1" height="14" fill="#a8a8a8"/><rect x="10" y="0" width="1" height="14" fill="#f4f4f4"/><rect x="11" y="0" width="1" height="14" fill="#a8a8a8"/><rect x="12" y="0" width="1" height="14" fill="#b4b4b4"/><rect x="13" y="0" width="1" height="14" fill="#c2c2c2"/><rect x="14" y="0" width="1" height="14" fill="#b4b4b4"/><rect x="15" y="0" width="1" height="14" fill="#d0d0d0"/><rect x="16" y="0" width="1" height="14" fill="#c4c4c4"/><rect x="17" y="0" width="1" height="14" fill="#e6e6e6"/><rect x="18" y="0" width="1" height="14" fill="#adadad"/><rect x="19" y="0" width="1" height="14" fill="#a0a0a0"/><rect x="20" y="0" width="1" height="14" fill="#989898"/><rect x="0" y="0" width="21" height="1" fill="#808080" opacity="0.25"/><rect x="0" y="13" width="21" height="1" fill="#808080" opacity="0.25"/></svg>
  <div class="lbl" style="left:890px;top:671px;font-size:11px;letter-spacing:-0.326px;font-weight:bold;">0.0 dB</div>
  <div class="gb" style="left:49px;top:723px;width:923px;height:58px"></div>
  <div class="gbt" style="left:53px;top:718px;width:196px;height:13px"></div><div class="lbl" style="left:74.5px;top:718px;font-size:11px;letter-spacing:-0.32px;font-weight:bold;">Source Pregain - Bluetooth ( 0x8c )</div>
  <svg class="abs" style="left:54px;top:717px" width="15" height="15" viewBox="0 0 15 15"><path d="M4.600 3.300A5.400 5.400 0 1 0 10.400 3.300" fill="none" stroke="#484848" stroke-width="1.800" stroke-linecap="round"/><path d="M7.500 1V7" stroke="#484848" stroke-width="1.800" stroke-linecap="round"/></svg>
  <div class="arr" style="left:951px;top:729px"></div>
  <div class="lbl" style="left:62px;top:751px;font-size:11px;letter-spacing:-0.407px;font-weight:bold;">Volume</div>
  <svg class="abs" style="left:121px;top:749px" width="19" height="16" viewBox="0 0 19 16"><path d="M1.400 4.300H4.700V11.700H1.400Z" fill="#e6e6e6" stroke="#9a9a9a" stroke-width="0.900"/><path d="M4.700 4.300L8.500 1.400V14.600L4.700 11.700Z" fill="#dedede" stroke="#9a9a9a" stroke-width="0.900" stroke-linejoin="round"/><path d="M10.500 6Q11.700 8 10.500 10M12.700 4.500Q14.700 8 12.700 11.500M15 3Q17.800 8 15 13" fill="none" stroke="#a6a6a6" stroke-width="0.900"/></svg>
  <div class="trk" style="left:160px;top:756px;width:720px"></div>
  <svg class="abs" style="left:759px;top:750px" width="21" height="14" viewBox="0 0 21 14" shape-rendering="crispEdges"><rect x="0" y="0" width="1" height="14" fill="#c6c6c6"/><rect x="1" y="0" width="1" height="14" fill="#ececec"/><rect x="2" y="0" width="1" height="14" fill="#e2e2e2"/><rect x="3" y="0" width="1" height="14" fill="#9a9a9a"/><rect x="4" y="0" width="1" height="14" fill="#a2a2a2"/><rect x="5" y="0" width="1" height="14" fill="#adadad"/><rect x="6" y="0" width="1" height="14" fill="#a0a0a0"/><rect x="7" y="0" width="1" height="14" fill="#aeaeae"/><rect x="8" y="0" width="1" height="14" fill="#a2a2a2"/><rect x="9" y="0" width="1" height="14" fill="#a8a8a8"/><rect x="10" y="0" width="1" height="14" fill="#f4f4f4"/><rect x="11" y="0" width="1" height="14" fill="#a8a8a8"/><rect x="12" y="0" width="1" height="14" fill="#b4b4b4"/><rect x="13" y="0" width="1" height="14" fill="#c2c2c2"/><rect x="14" y="0" width="1" height="14" fill="#b4b4b4"/><rect x="15" y="0" width="1" height="14" fill="#d0d0d0"/><rect x="16" y="0" width="1" height="14" fill="#c4c4c4"/><rect x="17" y="0" width="1" height="14" fill="#e6e6e6"/><rect x="18" y="0" width="1" height="14" fill="#adadad"/><rect x="19" y="0" width="1" height="14" fill="#a0a0a0"/><rect x="20" y="0" width="1" height="14" fill="#989898"/><rect x="0" y="0" width="21" height="1" fill="#808080" opacity="0.25"/><rect x="0" y="13" width="21" height="1" fill="#808080" opacity="0.25"/></svg>
  <div class="lbl" style="left:890px;top:751px;font-size:11px;letter-spacing:-0.326px;font-weight:bold;">0.0 dB</div>
  <div class="gb" style="left:49px;top:803px;width:923px;height:58px"></div>
  <div class="gbt" style="left:53px;top:798px;width:177px;height:13px"></div><div class="lbl" style="left:74.5px;top:798px;font-size:11px;letter-spacing:-0.365px;font-weight:bold;">Source Pregain - SPDIF ( 0x8d )</div>
  <svg class="abs" style="left:54px;top:797px" width="15" height="15" viewBox="0 0 15 15"><path d="M4.600 3.300A5.400 5.400 0 1 0 10.400 3.300" fill="none" stroke="#484848" stroke-width="1.800" stroke-linecap="round"/><path d="M7.500 1V7" stroke="#484848" stroke-width="1.800" stroke-linecap="round"/></svg>
  <div class="arr" style="left:951px;top:809px"></div>
  <div class="lbl" style="left:62px;top:831px;font-size:11px;letter-spacing:-0.407px;font-weight:bold;">Volume</div>
  <svg class="abs" style="left:121px;top:829px" width="19" height="16" viewBox="0 0 19 16"><path d="M1.400 4.300H4.700V11.700H1.400Z" fill="#e6e6e6" stroke="#9a9a9a" stroke-width="0.900"/><path d="M4.700 4.300L8.500 1.400V14.600L4.700 11.700Z" fill="#dedede" stroke="#9a9a9a" stroke-width="0.900" stroke-linejoin="round"/><path d="M10.500 6Q11.700 8 10.500 10M12.700 4.500Q14.700 8 12.700 11.500M15 3Q17.800 8 15 13" fill="none" stroke="#a6a6a6" stroke-width="0.900"/></svg>
  <div class="trk" style="left:160px;top:836px;width:720px"></div>
  <svg class="abs" style="left:759px;top:830px" width="21" height="14" viewBox="0 0 21 14" shape-rendering="crispEdges"><rect x="0" y="0" width="1" height="14" fill="#c6c6c6"/><rect x="1" y="0" width="1" height="14" fill="#ececec"/><rect x="2" y="0" width="1" height="14" fill="#e2e2e2"/><rect x="3" y="0" width="1" height="14" fill="#9a9a9a"/><rect x="4" y="0" width="1" height="14" fill="#a2a2a2"/><rect x="5" y="0" width="1" height="14" fill="#adadad"/><rect x="6" y="0" width="1" height="14" fill="#a0a0a0"/><rect x="7" y="0" width="1" height="14" fill="#aeaeae"/><rect x="8" y="0" width="1" height="14" fill="#a2a2a2"/><rect x="9" y="0" width="1" height="14" fill="#a8a8a8"/><rect x="10" y="0" width="1" height="14" fill="#f4f4f4"/><rect x="11" y="0" width="1" height="14" fill="#a8a8a8"/><rect x="12" y="0" width="1" height="14" fill="#b4b4b4"/><rect x="13" y="0" width="1" height="14" fill="#c2c2c2"/><rect x="14" y="0" width="1" height="14" fill="#b4b4b4"/><rect x="15" y="0" width="1" height="14" fill="#d0d0d0"/><rect x="16" y="0" width="1" height="14" fill="#c4c4c4"/><rect x="17" y="0" width="1" height="14" fill="#e6e6e6"/><rect x="18" y="0" width="1" height="14" fill="#adadad"/><rect x="19" y="0" width="1" height="14" fill="#a0a0a0"/><rect x="20" y="0" width="1" height="14" fill="#989898"/><rect x="0" y="0" width="21" height="1" fill="#808080" opacity="0.25"/><rect x="0" y="13" width="21" height="1" fill="#808080" opacity="0.25"/></svg>
  <div class="lbl" style="left:890px;top:831px;font-size:11px;letter-spacing:-0.326px;font-weight:bold;">0.0 dB</div>
  <div class="gb" style="left:49px;top:883px;width:923px;height:58px"></div>
  <div class="gbt" style="left:53px;top:878px;width:164px;height:13px"></div><div class="lbl" style="left:74.5px;top:878px;font-size:11px;letter-spacing:-0.288px;font-weight:bold;">Source Pregain - I2S ( 0x8e )</div>
  <svg class="abs" style="left:54px;top:877px" width="15" height="15" viewBox="0 0 15 15"><path d="M4.600 3.300A5.400 5.400 0 1 0 10.400 3.300" fill="none" stroke="#484848" stroke-width="1.800" stroke-linecap="round"/><path d="M7.500 1V7" stroke="#484848" stroke-width="1.800" stroke-linecap="round"/></svg>
  <div class="arr" style="left:951px;top:889px"></div>
  <div class="lbl" style="left:62px;top:911px;font-size:11px;letter-spacing:-0.407px;font-weight:bold;">Volume</div>
  <svg class="abs" style="left:121px;top:909px" width="19" height="16" viewBox="0 0 19 16"><path d="M1.400 4.300H4.700V11.700H1.400Z" fill="#e6e6e6" stroke="#9a9a9a" stroke-width="0.900"/><path d="M4.700 4.300L8.500 1.400V14.600L4.700 11.700Z" fill="#dedede" stroke="#9a9a9a" stroke-width="0.900" stroke-linejoin="round"/><path d="M10.500 6Q11.700 8 10.500 10M12.700 4.500Q14.700 8 12.700 11.500M15 3Q17.800 8 15 13" fill="none" stroke="#a6a6a6" stroke-width="0.900"/></svg>
  <div class="trk" style="left:160px;top:916px;width:720px"></div>
  <svg class="abs" style="left:759px;top:910px" width="21" height="14" viewBox="0 0 21 14" shape-rendering="crispEdges"><rect x="0" y="0" width="1" height="14" fill="#c6c6c6"/><rect x="1" y="0" width="1" height="14" fill="#ececec"/><rect x="2" y="0" width="1" height="14" fill="#e2e2e2"/><rect x="3" y="0" width="1" height="14" fill="#9a9a9a"/><rect x="4" y="0" width="1" height="14" fill="#a2a2a2"/><rect x="5" y="0" width="1" height="14" fill="#adadad"/><rect x="6" y="0" width="1" height="14" fill="#a0a0a0"/><rect x="7" y="0" width="1" height="14" fill="#aeaeae"/><rect x="8" y="0" width="1" height="14" fill="#a2a2a2"/><rect x="9" y="0" width="1" height="14" fill="#a8a8a8"/><rect x="10" y="0" width="1" height="14" fill="#f4f4f4"/><rect x="11" y="0" width="1" height="14" fill="#a8a8a8"/><rect x="12" y="0" width="1" height="14" fill="#b4b4b4"/><rect x="13" y="0" width="1" height="14" fill="#c2c2c2"/><rect x="14" y="0" width="1" height="14" fill="#b4b4b4"/><rect x="15" y="0" width="1" height="14" fill="#d0d0d0"/><rect x="16" y="0" width="1" height="14" fill="#c4c4c4"/><rect x="17" y="0" width="1" height="14" fill="#e6e6e6"/><rect x="18" y="0" width="1" height="14" fill="#adadad"/><rect x="19" y="0" width="1" height="14" fill="#a0a0a0"/><rect x="20" y="0" width="1" height="14" fill="#989898"/><rect x="0" y="0" width="21" height="1" fill="#808080" opacity="0.25"/><rect x="0" y="13" width="21" height="1" fill="#808080" opacity="0.25"/></svg>
  <div class="lbl" style="left:890px;top:911px;font-size:11px;letter-spacing:-0.326px;font-weight:bold;">0.0 dB</div>

</div></div>

<!-- scrollbar -->
<div class="abs" style="left:1000px;top:128px;width:17px;height:854px;background:#f0f0f0"></div>
<div class="abs" style="left:1000px;top:128px;width:1px;height:854px;background:#fff"></div>
<div class="abs" style="left:1001px;top:519px;width:15px;height:446px;background:#cdcdcd"></div>
<svg class="abs" style="left:1001px;top:128px" width="16" height="857" viewBox="0 0 16 857"><path d="M4 11L7.500 7.500L11 11" fill="none" stroke="#404040" stroke-width="1.700"/><path d="M4 844L7.500 847.500L11 844" fill="none" stroke="#404040" stroke-width="1.700"/></svg>

<!-- Effect List 2 bar -->
<div class="abs" style="left:37px;top:957px;width:947px;height:25px;border:1px solid #7d7d7d;border-radius:3px;background:linear-gradient(#e4e4e4,#dcdcdc 45%,#cfcfcf)"></div>
<div class="abs" style="left:55px;top:964px;width:0;height:0;border-top:4.500px solid transparent;border-bottom:4.500px solid transparent;border-left:5px solid #000"></div>
<div class="lbl" style="left:77.5px;top:963px;font-size:11px;letter-spacing:-0.414px;font-weight:bold;">Effect List 2</div>
<svg class="abs" style="left:954px;top:962px" width="20" height="14" viewBox="0 0 20 14"><path d="M2.500 2L8 7L2.500 12M10.500 2L16 7L10.500 12" fill="none" stroke="#b0b0b0" stroke-width="2.700"/></svg>

<!-- CPU / Memory -->

<div class="abs" style="left:36px;top:993px;width:306px;height:21px;background:#e6e6e6"></div>
<div class="abs" style="left:36px;top:993px;width:17px;height:21px;background:#0a9a0a"></div>
<div class="lbl" style="left:138px;top:998px;font-size:11px;letter-spacing:-0.415px;font-weight:bold;font-style:italic;">18 MCPS / 300 MCPS</div>
<div class="lbl" style="left:368px;top:998px;font-size:11px;letter-spacing:-0.16px;font-weight:bold;">Memory</div>
<div class="abs" style="left:417px;top:990px;width:81px;height:28px;background:#06dc06"></div>
<div class="lbl" style="left:417.5px;top:998px;font-size:11px;letter-spacing:-0.206px;font-weight:bold;font-style:italic;">189 KB / 320 KB</div>

<!-- bottom buttons -->
<div class="btn" style="left:667px;width:59px"></div><svg class="abs" style="left:671px;top:995px" width="18" height="17" viewBox="0 0 18 17"><path d="M8.500 0.800A7.600 7.600 0 1 0 13.200 14.300A9 9 0 0 1 8.500 0.800Z" fill="#111"/><circle cx="12.500" cy="5" r="0.900" fill="#111"/><circle cx="15.300" cy="8.500" r="0.900" fill="#111"/><circle cx="11.800" cy="9.500" r="0.900" fill="#111"/><circle cx="14" cy="12.300" r="0.800" fill="#111"/></svg><div class="lbl" style="left:691.5px;top:997px;font-size:11.5px;letter-spacing:-0.59px;font-weight:bold;line-height:14px">Sleep</div>
<div class="btn" style="left:731px;width:60px"></div><svg class="abs" style="left:737px;top:995px" width="18" height="17" viewBox="0 0 18 17"><path d="M4.400 11.900A5 5 0 1 0 3.400 7.400" fill="none" stroke="#111" stroke-width="1.800"/><path d="M1.800 9.500L7.200 12L2.500 14.500Z" fill="#111"/></svg><div class="lbl" style="left:757px;top:997px;font-size:11.5px;letter-spacing:-0.851px;font-weight:bold;line-height:14px">Reset</div>
<div class="btn" style="left:797px;width:70px"></div><svg class="abs" style="left:802.5px;top:995px" width="18" height="17" viewBox="0 0 18 17"><path d="M3 8A5.500 4.200 0 0 1 12 5" fill="none" stroke="#111" stroke-width="2.200"/><path d="M10.500 1.300L15.300 5L10.500 8.500Z" fill="#111"/><path d="M14.500 9A5.500 4.200 0 0 1 5.500 12" fill="none" stroke="#111" stroke-width="2.200"/><path d="M7 8.500L2.200 12L7 15.700Z" fill="#111"/></svg><div class="lbl" style="left:823px;top:997px;font-size:11.5px;letter-spacing:-0.867px;font-weight:bold;line-height:14px">Refresh</div>
<div class="btn" style="left:873px;width:94px"></div><svg class="abs" style="left:878px;top:995px" width="18" height="17" viewBox="0 0 18 17"><path d="M3 14.500L10 7.500" stroke="#111" stroke-width="3.400" stroke-linecap="round"/><path d="M14.800 2.200L11.800 5.200L12.300 6.700L14 7.200L16.800 4.300A4.300 4.300 0 1 1 14.800 2.200Z" fill="#111"/><circle cx="3.200" cy="14.300" r="0.700" fill="#aaa"/></svg><div class="lbl" style="left:899px;top:997px;font-size:10.2px;letter-spacing:-0.512px;font-weight:bold;line-height:14px">Factory Reset</div>
<div class="btn" style="left:974px;width:58px"></div><svg class="abs" style="left:979px;top:995px" width="18" height="17" viewBox="0 0 18 17"><path d="M1.800 10.200L9.200 3.500L15 3L14.500 8.500L7.200 15.300Z" fill="none" stroke="#111" stroke-width="1.700" stroke-linejoin="round"/><path d="M5.200 10.500L10.500 5.800L12 7.500L6.800 12.200Z" fill="none" stroke="#111" stroke-width="1.100"/><path d="M13 4.800L15.800 1.300" stroke="#111" stroke-width="1.300"/></svg><div class="lbl" style="left:998.5px;top:997px;font-size:11.5px;letter-spacing:-0.651px;font-weight:bold;line-height:14px">Tag...</div>

<!-- status bar -->
<svg class="abs" style="left:3px;top:1025px" width="10" height="12" viewBox="0 0 10 12"><path d="M1.500 2.500L5 6L8.500 2.500M5 6V10" fill="none" stroke="#000" stroke-width="1.500"/><path d="M3 11L5 7.500L7 11Z" fill="#000"/></svg>
<div class="txt" style="left:19.5px;top:1024px;font-size:11px;letter-spacing:0.043px;font-weight:normal;white-space:pre">USB&#91;0&#93; 'hp2Stream USB Audio CONNECTED -- &#91;BPxx Audio Play SDK,&nbsp; Version: V0.1.12,&nbsp; Effect Lib: V1.35.1&#93;</div>

<!-- watermark -->
<div class="abs" style="left:5px;top:965px;width:48px;height:48px;border-radius:4px;background:rgba(55,82,117,0.78)"></div>
<div class="abs" style="left:36px;top:993px;width:18px;height:22px;background:#0ac40a"></div>
<div class="abs" style="left:36px;top:993px;width:17px;height:20px;border-radius:0 0 3px 0;background:linear-gradient(#0f8038,#0b6a2e)"></div>
<svg class="abs" style="left:5px;top:965px" width="48" height="48" viewBox="0 0 48 48"><path d="M5 3.800H13V28.300H24V33.300H5Z" fill="#5fa6e6"/><path d="M25.600 14.900H43.400V20.600H31.600V28.300H43V33H31.600V44.700H25.600Z" fill="#62aae8"/><path d="M31 28.300H43V33H31Z" fill="#1a9c98"/><path d="M31 33H31.600V44.700H31Z" fill="#3fb0a0"/></svg>
<div class="lbl" style="left:5.5px;top:1011.5px;font-size:19px;letter-spacing:0.847px;font-weight:bold;line-height:22px;color:rgba(56,86,130,0.88);-webkit-text-stroke:0.5px rgba(56,86,130,0.88)">LautsprecherForum.eu</div>
<div class="lbl" style="left:10px;top:998px;font-size:10.5px;letter-spacing:-0.915px;font-weight:bold;color:#0c1f50">CPU</div>

</body>
</html>
